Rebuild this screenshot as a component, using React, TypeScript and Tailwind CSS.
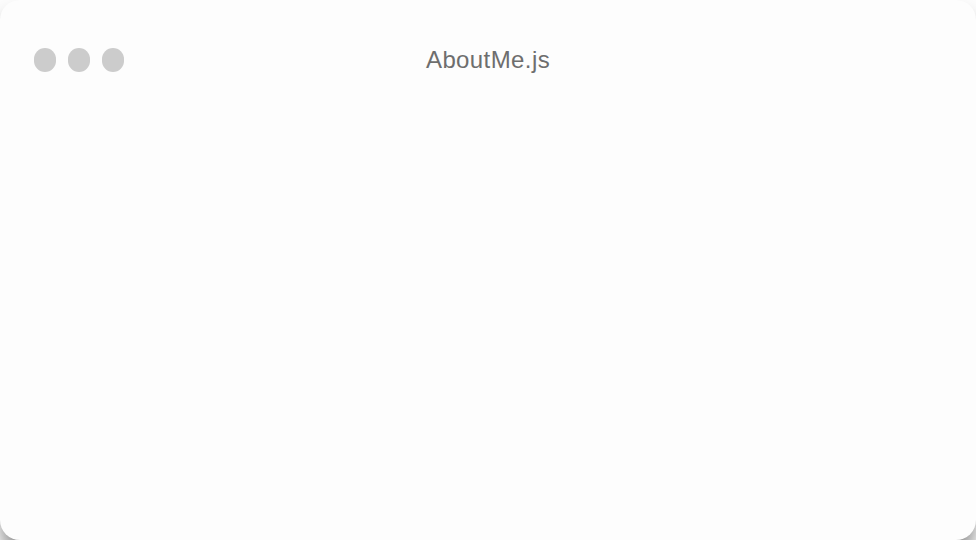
export default function App() {
  return (
    <div className="h-[540px] w-full overflow-hidden bg-[#fcfcfc]">
      <div className="h-[540px] w-full rounded-[20px] bg-[#fdfdfd] shadow-[0_14px_18px_-2px_rgba(0,0,0,0.45)]">
        <div className="relative flex h-[120px] items-start px-[34px] pt-[48px]">
          <div className="flex gap-[12px]">
            <span className="h-[24px] w-[22px] rounded-full bg-[#cccccc]" />
            <span className="h-[24px] w-[22px] rounded-full bg-[#cccccc]" />
            <span className="h-[24px] w-[22px] rounded-full bg-[#cccccc]" />
          </div>
          <div
            className="absolute left-0 right-0 top-[42px] text-center text-[24px] tracking-[0.4px] text-[#6e6e6e]"
            style={{ fontFamily: '"Liberation Sans", Arial, sans-serif' }}
          >
            AboutMe.js
          </div>
        </div>
      </div>
    </div>
  );
}
